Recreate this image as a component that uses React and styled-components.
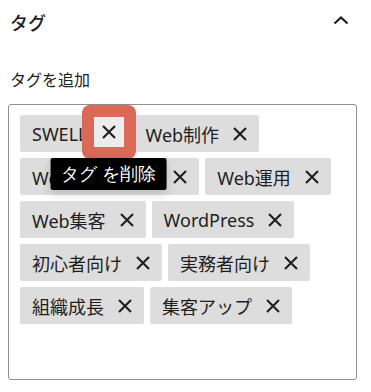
import React from 'react'
import styled, { createGlobalStyle } from 'styled-components'

const GlobalStyle = createGlobalStyle`
    body {
        margin: 0;
        background: #fff;
        font-family: "Noto Sans", "Noto Sans CJK JP", sans-serif;
        color: #1e1e1e;
    }
`

const Panel = styled.div`
    width: 371px;
    height: 392px;
    overflow: hidden;
    background: #fff;
`

const Header = styled.div`
    display: flex;
    align-items: center;
    justify-content: space-between;
    height: 46px;
    padding: 0 22px 0 10px;
`

const Title = styled.h2`
    margin: 0;
    font-size: 18px;
    font-weight: 500;
    line-height: 24px;
`

const Chevron = styled.svg`
    width: 16px;
    height: 10px;
    margin-top: -6px;
`

const Label = styled.div`
    padding: 0 10px;
    margin-top: 22px;
    font-size: 16px;
    line-height: 24px;
`

const Field = styled.div`
    margin: 12px 14px 0 8px;
    padding: 10px 11px 10px 11px;
    border: 1px solid #8f8f8f;
    border-radius: 3px;
    height: 254px;
`

const TagList = styled.div`
    display: flex;
    flex-wrap: wrap;
    gap: 6px;
`

const Tag = styled.span`
    display: inline-flex;
    align-items: center;
    height: 37px;
    padding: 0 4px 0 12px;
    background: #dddddd;
    border-radius: 2px;
    font-size: 18px;
    white-space: nowrap;
`

const Highlight = styled.span`
    position: relative;
    z-index: 2;
    display: inline-flex;
    margin: -14px -12px -10px -6px;
    padding: 12px 12px 12px 12px;
    background: ${p => (p.$on ? '#da6a57' : 'transparent')};
    border-radius: 8px;
`

const Remove = styled.button`
    position: relative;
    display: flex;
    align-items: center;
    justify-content: center;
    width: 30px;
    height: 30px;
    margin-left: ${p => (p.$inHighlight ? '0' : '6px')};
    padding: 0;
    border: none;
    border-radius: 0;
    background: ${p => (p.$active ? '#ececec' : 'transparent')};
    color: #1e1e1e;
    cursor: pointer;
`

const Tooltip = styled.span`
    position: absolute;
    top: calc(100% + 11px);
    left: 50%;
    transform: translateX(-50%);
    z-index: 3;
    padding: 0 11px;
    height: 32px;
    line-height: 32px;
    background: #000;
    color: #fff;
    border-radius: 2px;
    font-size: 17.5px;
    white-space: nowrap;
    box-shadow: 0 4px 10px rgba(0, 0, 0, 0.15);
`

const Input = styled.input`
    display: block;
    width: 100%;
    height: 40px;
    margin-top: 6px;
    border: none;
    outline: none;
    background: transparent;
    font-size: 18px;
`

const tags = [
    'SWELL',
    'Web制作',
    'Webデザイナー',
    'Web運用',
    'Web集客',
    'WordPress',
    '初心者向け',
    '実務者向け',
    '組織成長',
    '集客アップ',
]

const Cross = () => (
    <svg width="14" height="14" viewBox="0 0 14 14">
        <path d="M1 1L13 13M13 1L1 13" stroke="currentColor" strokeWidth="2.1" />
    </svg>
)

export default function App() {
    return (
        <Panel>
            <GlobalStyle />
            <Header>
                <Title>タグ</Title>
                <Chevron viewBox="0 0 16 10">
                    <path d="M1.5 8.5L8 2.5L14.5 8.5" fill="none" stroke="#1e1e1e" strokeWidth="2.2" />
                </Chevron>
            </Header>
            <Label>タグを追加</Label>
            <Field>
                <TagList>
                    {tags.map((t, i) => (
                        <Tag key={t}>
                            {t}
                            {i === 0 ? (
                                <Highlight $on>
                                    <Remove $active $inHighlight aria-label="タグ を削除">
                                        <Cross />
                                        <Tooltip>タグ を削除</Tooltip>
                                    </Remove>
                                </Highlight>
                            ) : (
                                <Remove aria-label="タグ を削除">
                                    <Cross />
                                </Remove>
                            )}
                        </Tag>
                    ))}
                </TagList>
                <Input type="text" />
            </Field>
        </Panel>
    )
}
